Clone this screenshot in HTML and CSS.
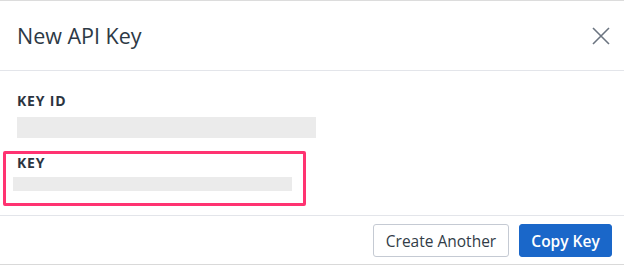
FILE: index.html
```html
<!DOCTYPE html>
<html>
<head>
<meta charset="utf-8">
<link rel="stylesheet" href="styles.css">
</head>
<body>
<div class="modal">
  <div class="header">
    <h1 class="title">New API Key</h1>
    <button class="close" aria-label="Close">
      <svg width="18" height="18" viewBox="0 0 18 18"><path d="M1 1 L17 17 M17 1 L1 17" stroke="#6b7480" stroke-width="1.6" fill="none"/></svg>
    </button>
  </div>
  <div class="content">
    <div class="field">
      <div class="label">KEY ID</div>
      <div class="bar bar-id"></div>
    </div>
    <div class="field highlight">
      <div class="label">KEY</div>
      <div class="bar bar-key"></div>
    </div>
  </div>
  <div class="footer">
    <button class="btn btn-secondary">Create Another</button>
    <button class="btn btn-primary">Copy Key</button>
  </div>
</div>
</body>
</html>
```
FILE: styles.css
```css
html, body {
  margin: 0;
  padding: 0;
  background: #fff;
  font-family: "Open Sans", "Noto Sans", sans-serif;
}
.modal {
  width: 624px;
  border-top: 1px solid #dcdcdc;
  border-bottom: 1px solid #d9d9d9;
}
.header {
  height: 69px;
  display: flex;
  align-items: center;
  justify-content: space-between;
  padding: 0 14px 0 17px;
  border-bottom: 1px solid #e3e5ea;
}
.title {
  margin: 0;
  font-size: 21.5px;
  font-weight: 400;
  color: #2d3945;
  line-height: 26px;
}
.close {
  border: 0;
  background: none;
  padding: 0;
  width: 18px;
  height: 18px;
  display: flex;
}
.content {
  padding: 22px 0 0 17px;
  height: 122px;
}
.label {
  font-size: 14px;
  font-weight: 700;
  line-height: 16px;
  color: #2c3440;
  letter-spacing: 0.8px;
}
.bar {
  background: #ebebeb;
}
.bar-id {
  margin-top: 8px;
  width: 299px;
  height: 21px;
}
.highlight {
  margin-top: 13px;
  margin-left: -14px;
  width: 286px;
  border: 3px solid #ff3371;
  border-radius: 2px;
  padding: 1px 0 12px 11px;
}
.bar-key {
  margin-top: 6px;
  margin-left: -4px;
  width: 279px;
  height: 14px;
}
.footer {
  border-top: 1px solid #e3e5ea;
  height: 49px;
  display: flex;
  justify-content: flex-end;
  align-items: flex-start;
  gap: 10px;
  padding: 8px 12px 0 0;
  box-sizing: border-box;
}
.btn {
  height: 33px;
  border-radius: 3px;
  font-family: "Open Sans", "Noto Sans", sans-serif;
  font-size: 15.5px;
  padding: 0;
}
.btn-secondary {
  width: 136px;
  background: #fff;
  border: 1px solid #c5cad3;
  color: #323c47;
}
.btn-primary {
  width: 93px;
  background: #1a67c9;
  border: 1px solid #1a67c9;
  color: #fff;
  font-weight: 600;
}
```
